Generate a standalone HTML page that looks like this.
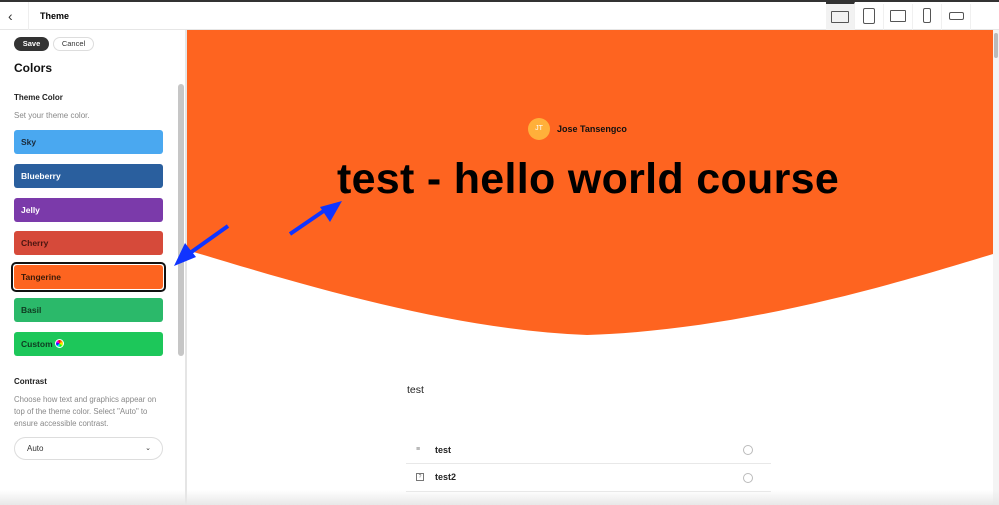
<!DOCTYPE html>
<html><head><style>
*{margin:0;padding:0;box-sizing:border-box}
body{width:999px;height:505px;overflow:hidden;background:#fff;font-family:"Liberation Sans",sans-serif;position:relative}
.top{position:absolute;left:0;top:0;width:999px;height:30px;border-top:2px solid #333;border-bottom:1px solid #e6e6e6;background:#fff}
.abs{position:absolute}
.sw{position:absolute;left:14px;width:149px;height:24px;border-radius:3px;font-size:8.5px;font-weight:bold;padding-left:7px;line-height:24px}
.dev{position:absolute;top:2px;height:28px;width:29px;border-right:1px solid #f0f0f0}
</style></head><body>
<div class="top">
 <div class="abs" style="left:8px;top:6px;font-size:14px;color:#333">&#8249;</div>
 <div class="abs" style="left:28px;top:0;width:1px;height:28px;background:#eee"></div>
 <div class="abs" style="left:40px;top:9px;font-size:9px;font-weight:bold">Theme</div>
 <div class="dev" style="left:826px;background:#f2f2f2;border-top:2px solid #333;top:0"><div class="abs" style="left:5px;top:7px;width:18px;height:12px;border:1px solid #555;border-radius:1px"></div></div>
 <div class="dev" style="left:855px"><div class="abs" style="left:8px;top:4px;width:12px;height:16px;border:1px solid #555;border-radius:2px"></div></div>
 <div class="dev" style="left:884px"><div class="abs" style="left:6px;top:6px;width:16px;height:12px;border:1px solid #555;border-radius:1px"></div></div>
 <div class="dev" style="left:913px"><div class="abs" style="left:10px;top:4px;width:8px;height:15px;border:1px solid #555;border-radius:2px"></div></div>
 <div class="dev" style="left:942px"><div class="abs" style="left:7px;top:8px;width:15px;height:8px;border:1px solid #555;border-radius:2px"></div></div>
</div>
<div class="abs" style="left:14px;top:37px;width:35px;height:14px;background:#333;border-radius:7px;color:#fff;font-size:7.5px;font-weight:bold;text-align:center;line-height:14px">Save</div>
<div class="abs" style="left:53px;top:37px;width:41px;height:14px;border:1px solid #ddd;border-radius:7px;color:#333;font-size:7.5px;text-align:center;line-height:12px">Cancel</div>
<div class="abs" style="left:14px;top:61px;font-size:12px;font-weight:bold;color:#111">Colors</div>
<div class="abs" style="left:14px;top:93px;font-size:8px;font-weight:bold;color:#222">Theme Color</div>
<div class="abs" style="left:14px;top:111px;font-size:8px;color:#888">Set your theme color.</div>
<div class="sw" style="top:130px;background:#4aa8f0;color:#1a2a3a">Sky</div>
<div class="sw" style="top:164px;background:#2a5f9e;color:#fff">Blueberry</div>
<div class="sw" style="top:198px;background:#7b3aaa;color:#fff">Jelly</div>
<div class="sw" style="top:231px;background:#d64a3a;color:#4a1510">Cherry</div>
<div class="abs" style="left:11px;top:262px;width:155px;height:30px;border:2px solid #111;border-radius:5px"></div>
<div class="sw" style="top:265px;background:#fd6420;color:#3a1a08">Tangerine</div>
<div class="sw" style="top:298px;background:#2bb96a;color:#0f3a20">Basil</div>
<div class="sw" style="top:332px;background:#1dc75a;color:#0f3a20">Custom <span style="display:inline-block;width:9px;height:9px;border-radius:50%;background:conic-gradient(red,orange,yellow,lime,cyan,blue,magenta,red);vertical-align:-1px;border:1px solid #fff"></span></div>
<div class="abs" style="left:14px;top:377px;font-size:8px;font-weight:bold;color:#222">Contrast</div>
<div class="abs" style="left:14px;top:394px;width:150px;font-size:7.8px;line-height:11.8px;color:#888">Choose how text and graphics appear on top of the theme color. Select "Auto" to ensure accessible contrast.</div>
<div class="abs" style="left:14px;top:437px;width:149px;height:23px;border:1px solid #ddd;border-radius:12px;font-size:8px;color:#333;line-height:21px;padding-left:12px">Auto<span style="position:absolute;right:11px;font-size:7px">&#8964;</span></div>
<div class="abs" style="left:178px;top:84px;width:6px;height:272px;background:#c6c6c6;border-radius:3px"></div>
<div class="abs" style="left:185px;top:30px;width:2px;height:475px;background:#e5e5e5"></div>
<svg class="abs" style="left:187px;top:30px" width="806" height="310">
 <path d="M0 0H806V224 C720 250 560 300 400 305 C260 300 100 250 0 220Z" fill="#fe6420"/>
</svg>
<div class="abs" style="left:993px;top:30px;width:6px;height:475px;background:#f4f4f4"></div>
<div class="abs" style="left:994px;top:33px;width:4px;height:25px;background:#bbb;border-radius:2px"></div>
<div class="abs" style="left:528px;top:118px;width:22px;height:22px;border-radius:50%;background:#ffb03a;color:#fff;font-size:7px;text-align:center;line-height:22px">JT</div>
<div class="abs" style="left:557px;top:124px;font-size:9px;font-weight:bold;color:#111">Jose Tansengco</div>
<div class="abs" style="left:187px;top:155px;width:802px;text-align:center;font-size:43px;font-weight:bold;color:#000;letter-spacing:0.3px">test - hello world course</div>
<svg class="abs" style="left:170px;top:190px" width="180" height="90">
 <line x1="58" y1="36" x2="20" y2="63" stroke="#1034ff" stroke-width="4"/>
 <polygon points="4,76 15,53 26,67" fill="#1034ff"/>
 <line x1="120" y1="44" x2="158" y2="18" stroke="#1034ff" stroke-width="4"/>
 <polygon points="172,11 160,32 150,17" fill="#1034ff"/>
</svg>
<div class="abs" style="left:407px;top:384px;font-size:10.5px;color:#222">test</div>
<div class="abs" style="left:416px;top:446px;font-size:7px;color:#777">&#8801;</div>
<div class="abs" style="left:435px;top:445px;font-size:9px;font-weight:bold;color:#222">test</div>
<div class="abs" style="left:743px;top:445px;width:10px;height:10px;border:1px solid #bbb;border-radius:50%"></div>
<div class="abs" style="left:406px;top:463px;width:365px;height:1px;background:#e8e8e8"></div>
<div class="abs" style="left:416px;top:473px;width:8px;height:8px;border:1px solid #777;font-size:5px;text-align:center;line-height:6px;color:#555">?</div>
<div class="abs" style="left:435px;top:472px;font-size:9px;font-weight:bold;color:#222">test2</div>
<div class="abs" style="left:743px;top:473px;width:10px;height:10px;border:1px solid #bbb;border-radius:50%"></div>
<div class="abs" style="left:406px;top:491px;width:365px;height:1px;background:#e8e8e8"></div>
<div class="abs" style="left:0;top:490px;width:999px;height:15px;background:linear-gradient(#fff0,#e8e8e8)"></div>
</body></html>
